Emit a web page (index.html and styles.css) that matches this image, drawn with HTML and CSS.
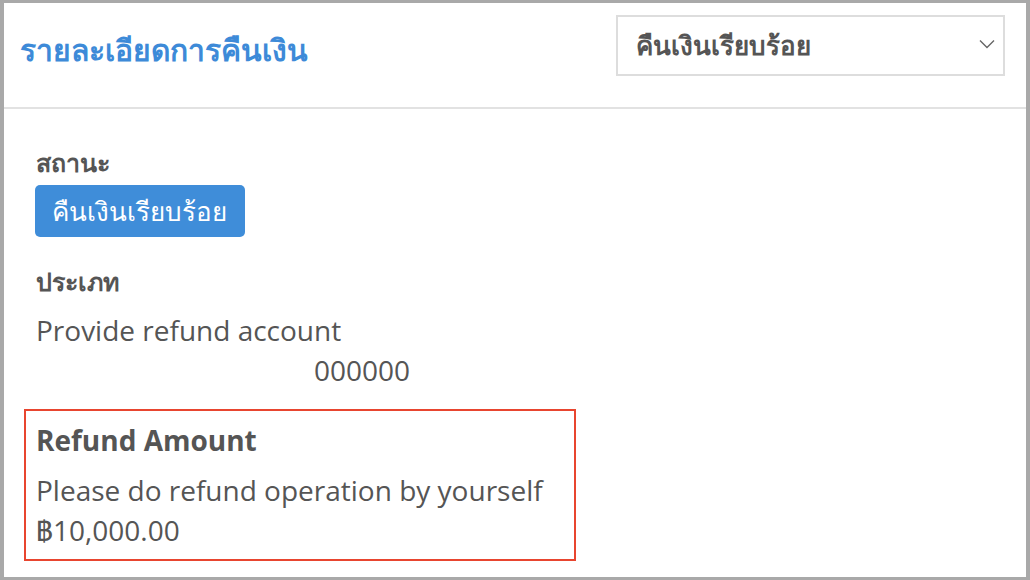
FILE: index.html
```html
<!DOCTYPE html>
<html lang="th">
<head>
    <meta charset="UTF-8">
    <meta name="viewport" content="width=device-width, initial-scale=1.0">
    <title>รายละเอียดการคืนเงิน</title>
    <link rel="stylesheet" href="styles.css">
</head>
<body>
    <div class="refund-panel">
        <div class="panel-header">
            <h1 class="panel-title">รายละเอียดการคืนเงิน</h1>
            <div class="status-select">
                <span>คืนเงินเรียบร้อย</span>
                <svg class="chevron" width="16" height="10" viewBox="0 0 16 10">
                    <path d="M1 1.5 L8 8.5 L15 1.5" fill="none" stroke="#666" stroke-width="1.4"/>
                </svg>
            </div>
        </div>
        <div class="panel-body">
            <div class="field-label">สถานะ</div>
            <span class="status-badge">คืนเงินเรียบร้อย</span>

            <div class="field-label type-label">ประเภท</div>
            <div class="field-value">Provide refund account</div>
            <div class="field-value account-no">000000</div>

            <div class="amount-box">
                <div class="amount-title">Refund Amount</div>
                <div class="field-value">Please do refund operation by yourself</div>
                <div class="field-value">฿10,000.00</div>
            </div>
        </div>
    </div>
</body>
</html>
```

FILE: styles.css
```css
body {
    margin: 0;
    padding: 0;
    background: #ffffff;
    font-family: 'Open Sans', 'Noto Sans', sans-serif;
    color: #555;
}

.refund-panel {
    box-sizing: border-box;
    width: 1030px;
    height: 580px;
    border-style: solid;
    border-color: #a9a9a9;
    border-width: 3px 4px 3px 4px;
    background: #fff;
}

.panel-header {
    box-sizing: border-box;
    height: 106px;
    display: flex;
    justify-content: space-between;
    align-items: flex-start;
    padding: 12px 21px 0 16px;
    border-bottom: 2px solid #e2e2e2;
}

.panel-title {
    margin: 0;
    font-size: 30px;
    line-height: 70px;
    font-weight: 600;
    color: #3d8ad8;
}

.status-select {
    box-sizing: border-box;
    width: 389px;
    height: 61px;
    border: 2px solid #dddddd;
    display: flex;
    align-items: center;
    justify-content: space-between;
    padding: 0 8px 0 18px;
    font-size: 26px;
    font-weight: 600;
    color: #555;
}

.chevron {
    margin-top: -4px;
}

.panel-body {
    padding: 35px 0 0 32px;
}

.field-label {
    font-size: 25px;
    line-height: 36px;
    font-weight: 700;
    color: #555;
}

.status-badge {
    display: inline-block;
    margin-top: 5px;
    height: 52px;
    line-height: 52px;
    padding: 0 18px 0 17px;
    margin-left: -1px;
    border-radius: 5px;
    background: #3f8dd9;
    color: #fff;
    font-size: 26px;
}

.type-label {
    margin-top: 26px;
}

.field-value {
    font-size: 28px;
    line-height: 40px;
    color: #555;
}

.type-label + .field-value {
    margin-top: 11px;
}

.account-no {
    padding-left: 278px;
}

.amount-box {
    box-sizing: border-box;
    width: 552px;
    margin: 19px 0 0 -12px;
    padding: 9px 10px 9px 10px;
    border: 2px solid #e8452f;
}

.amount-title {
    font-size: 28px;
    line-height: 40px;
    font-weight: 700;
    color: #555;
    margin-bottom: 10px;
}
```
